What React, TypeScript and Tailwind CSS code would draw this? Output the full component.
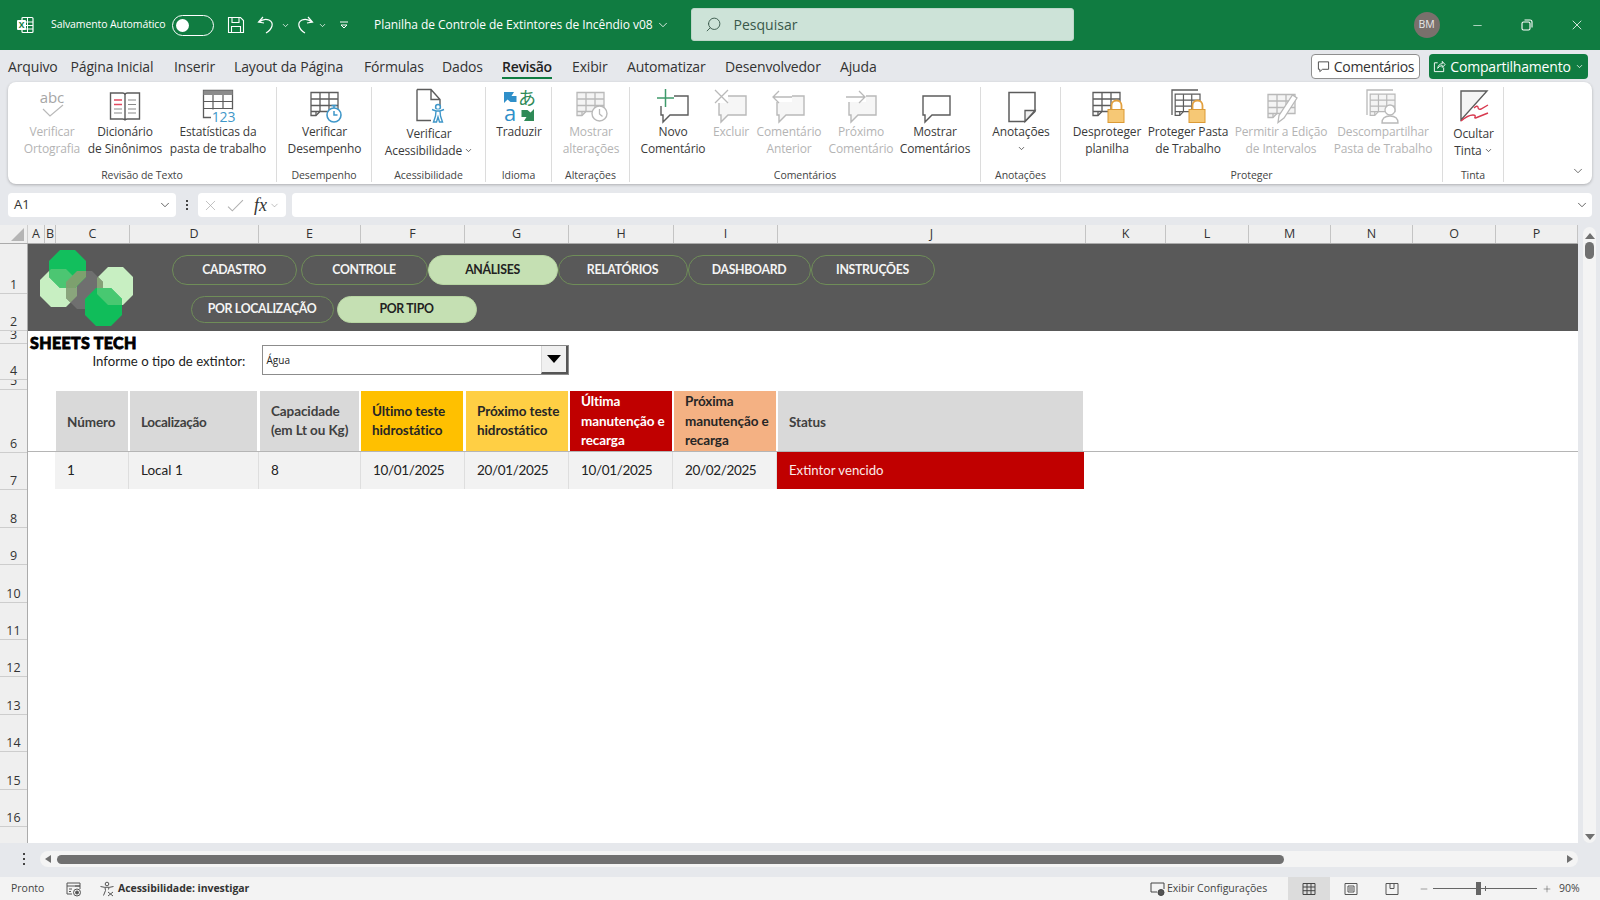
import React from "react";
import { ChevronDown, Search, Minus, X, Plus } from "lucide-react";

const D = "#5c5c5c";
const G = "#b9b9b9";

const Ic = ({ children }: { children: React.ReactNode }) => (
  <svg viewBox="0 0 36 36" fill="none" className="w-[36px] h-[36px] shrink-0">
    {children}
  </svg>
);

const Sheet = ({ c, soft = false }: { c: string; soft?: boolean }) => (
  <g stroke={c} strokeWidth="1.3">
    <path d="M4 4.500h27v19H13l-4 4H4z" fill={soft ? "#f4f4f4" : "#fff"} />
    <path d="M4 11h27M4 17.500h27M13 4.500v19M22 4.500v19" />
    <path d="M4 23.500h9M9 27.500v-4h4" />
  </g>
);

const Bubble = ({ c, k }: { c: string; k: "add" | "del" | "prev" | "next" | "show" }) => (
  <>
    <path d="M6 8h27v19H15l-7 7v-7H6z" fill={k === "show" || k === "add" ? "#fff" : "#f6f6f6"} stroke={c} strokeWidth="1.4" />
    {k === "add" && (
      <g>
        <rect x="1" y="1" width="18" height="17" fill="#fff" />
        <path d="M2 10h17M10.500 1v18" stroke="#3f9a6b" strokeWidth="1.500" />
      </g>
    )}
    {k === "del" && (
      <g>
        <rect x="2" y="2" width="13" height="13" fill="#fff" />
        <path d="M2 2l13 13M15 2L2 15" stroke={G} strokeWidth="1.300" />
      </g>
    )}
    {k === "prev" && (
      <g>
        <rect x="1" y="3" width="20" height="11" fill="#fff" />
        <path d="M2 9h19M8 3L2 9l6 6" stroke={G} strokeWidth="1.300" />
      </g>
    )}
    {k === "next" && (
      <g>
        <rect x="3" y="3" width="20" height="11" fill="#fff" />
        <path d="M3 9h19M16 3l6 6-6 6" stroke={G} strokeWidth="1.300" />
      </g>
    )}
  </>
);

const Lock = () => (
  <g>
    <path d="M22.500 22v-4.500a5 5 0 0 1 10 0V22" stroke="#e3a03e" strokeWidth="1.800" fill="#fff" />
    <rect x="19" y="21.500" width="16" height="13" fill="#f6c875" stroke="#dc9a35" />
  </g>
);

const icons: Record<string, React.ReactNode> = {
  abc: (
    <Ic>
      <text x="18" y="15" textAnchor="middle" fontSize="15" fill="#a6a6a6" fontFamily="Open Sans, sans-serif">abc</text>
      <path d="M9 21l7 7 13-11" stroke={G} strokeWidth="1.200" />
    </Ic>
  ),
  book: (
    <Ic>
      <path d="M3.500 5h12q2.500 0 2.500 2 0-2 2.500-2h12v26h-12q-2.500 0-2.500 1.500 0-1.500-2.500-1.500h-12zM18 7v25" stroke={D} strokeWidth="1.400" fill="#fff" />
      <path d="M7 12h8M7 16.500h8" stroke="#e1495f" strokeWidth="1.300" />
      <path d="M7 21h8M7 25h8M21 12h8M21 16.500h8M21 21h8M21 25h8" stroke="#8a8a8a" strokeWidth="1.200" />
    </Ic>
  ),
  stats: (
    <Ic>
      <path d="M3.500 2.500h29v27h-29z" stroke={D} fill="#fff" strokeWidth="1.300" />
      <path d="M3.500 2.500h29v4.500h-29z" fill="#8c8c8c" />
      <path d="M3.500 13.500h29M3.500 20.500h29M13 7v22M23 7v14" stroke={D} strokeWidth="1.200" />
      <rect x="11" y="21.500" width="25" height="14" fill="#fff" />
      <text x="23.500" y="33.500" textAnchor="middle" fontSize="14" fill="#3f97c9" fontFamily="Open Sans, sans-serif">123</text>
    </Ic>
  ),
  perf: (
    <Ic>
      <Sheet c={D} />
      <circle cx="27" cy="27" r="7" fill="#fff" stroke="#3f97c9" strokeWidth="1.600" />
      <path d="M27 23v4h3.500M24.500 17.500h5M27 17.500v2.500" stroke="#3f97c9" strokeWidth="1.500" />
    </Ic>
  ),
  access: (
    <Ic>
      <path d="M6 1.500h14l9 10v7M6 1.500v31h14M20 1.500v10h9" stroke={D} strokeWidth="1.400" fill="#fff" />
      <circle cx="27" cy="19" r="2.400" stroke="#3f97c9" strokeWidth="1.500" fill="#fff" />
      <path d="M21 21.500l4 1.500h4l4-1.500M25 23l-.5 5-2 6h3l1.500-5 1.500 5h3l-2-6-.5-5" stroke="#3f97c9" strokeWidth="1.400" fill="#fff" />
    </Ic>
  ),
  trans: (
    <Ic>
      <path d="M3 4v11l3.500-3.500 3 2.500h6V8h-5l2.500-4z" fill="#2f8fc9" />
      <text x="9" y="33" textAnchor="middle" fontSize="22" fill="#2f8fc9" fontFamily="Open Sans, sans-serif">a</text>
      <text x="26" y="17" textAnchor="middle" fontSize="18" fill="#2f8a57" fontFamily="Noto Sans CJK JP, sans-serif">あ</text>
      <path d="M33 33V21l-3.500 3.500-3-2.500h-6v7h5l-2.500 4z" fill="#2f8a57" />
    </Ic>
  ),
  changes: (
    <Ic>
      <Sheet c={G} soft />
      <circle cx="26.500" cy="25.500" r="7.500" fill="#fff" stroke={G} strokeWidth="1.400" />
      <path d="M26.500 21v5l3 2.500" stroke={G} strokeWidth="1.300" />
    </Ic>
  ),
  add: <Ic><Bubble c={D} k="add" /></Ic>,
  del: <Ic><Bubble c={G} k="del" /></Ic>,
  prev: <Ic><Bubble c={G} k="prev" /></Ic>,
  next: <Ic><Bubble c={G} k="next" /></Ic>,
  show: <Ic><Bubble c={D} k="show" /></Ic>,
  note: (
    <Ic>
      <path d="M6 4.500h26v19L22 33.500H6z" fill="#fff" stroke={D} strokeWidth="1.500" />
      <path d="M32 22.500H22v11z" fill="#f0f0f0" stroke={D} strokeWidth="1.300" />
    </Ic>
  ),
  lock1: (
    <Ic>
      <Sheet c={D} />
      <Lock />
    </Ic>
  ),
  lock2: (
    <Ic>
      <path d="M2 27V2h26" stroke={D} strokeWidth="1.300" />
      <g transform="translate(1.500 2) scale(0.92)"><Sheet c={D} /></g>
      <Lock />
    </Ic>
  ),
  edit: (
    <Ic>
      <g transform="translate(1 2)"><Sheet c={G} soft /></g>
      <path d="M34 10L21 30l-6 4.500 1-7L29.500 7z" fill="#fff" stroke={G} strokeWidth="1.300" />
    </Ic>
  ),
  unshare: (
    <Ic>
      <path d="M2 27V2h26" stroke={G} strokeWidth="1.300" />
      <g transform="translate(1.500 2) scale(0.92)"><Sheet c={G} soft /></g>
      <circle cx="25" cy="22" r="5" fill="#fff" stroke={G} strokeWidth="1.300" />
      <path d="M17 35q0-7 8-7t8 7z" fill="#fff" stroke={G} strokeWidth="1.300" />
    </Ic>
  ),
  ink: (
    <Ic>
      <path d="M5 3h26L5 32z" fill="#f4f4f4" stroke={D} strokeWidth="1.400" />
      <path d="M18 20q3-3 4-1 0 3 3 2l7-4" stroke="#d8394f" strokeWidth="1.400" />
      <path d="M5 33q7-6 12-6 3 0 2 2t3 0l10-4" stroke="#d8394f" strokeWidth="1.400" />
    </Ic>
  ),
};

type Btn = { w: number; icon: string; lines: string[]; off?: boolean; chev?: boolean; low?: boolean };
type Group = { label: string; w: number; pl: number; items: Btn[] };

const groups: Group[] = [
  {
    label: "Revisão de Texto", w: 269, pl: 8,
    items: [
      { w: 72, icon: "abc", lines: ["Verificar", "Ortografia"], off: true },
      { w: 74, icon: "book", lines: ["Dicionário", "de Sinônimos"] },
      { w: 112, icon: "stats", lines: ["Estatísticas da", "pasta de trabalho"] },
    ],
  },
  { label: "Desempenho", w: 95, pl: 0, items: [{ w: 95, icon: "perf", lines: ["Verificar", "Desempenho"] }] },
  { label: "Acessibilidade", w: 114, pl: 0, items: [{ w: 114, icon: "access", lines: ["Verificar", "Acessibilidade"], chev: true, low: true }] },
  { label: "Idioma", w: 66, pl: 0, items: [{ w: 66, icon: "trans", lines: ["Traduzir"] }] },
  { label: "Alterações", w: 78, pl: 0, items: [{ w: 78, icon: "changes", lines: ["Mostrar", "alterações"], off: true }] },
  {
    label: "Comentários", w: 351, pl: 7,
    items: [
      { w: 72, icon: "add", lines: ["Novo", "Comentário"] },
      { w: 44, icon: "del", lines: ["Excluir"], off: true },
      { w: 72, icon: "prev", lines: ["Comentário", "Anterior"], off: true },
      { w: 72, icon: "next", lines: ["Próximo", "Comentário"], off: true },
      { w: 76, icon: "show", lines: ["Mostrar", "Comentários"] },
    ],
  },
  { label: "Anotações", w: 80, pl: 0, items: [{ w: 80, icon: "note", lines: ["Anotações", ""], chev: true }] },
  {
    label: "Proteger", w: 382, pl: 6,
    items: [
      { w: 80, icon: "lock1", lines: ["Desproteger", "planilha"] },
      { w: 82, icon: "lock2", lines: ["Proteger Pasta", "de Trabalho"] },
      { w: 104, icon: "edit", lines: ["Permitir a Edição", "de Intervalos"], off: true },
      { w: 100, icon: "unshare", lines: ["Descompartilhar", "Pasta de Trabalho"], off: true },
    ],
  },
  { label: "Tinta", w: 61, pl: 0, items: [{ w: 61, icon: "ink", lines: ["Ocultar", "Tinta"], chev: true, low: true }] },
];

const tabs: [string, number][] = [
  ["Arquivo", 62.5], ["Página Inicial", 103.5], ["Inserir", 60], ["Layout da Página", 130], ["Fórmulas", 78], ["Dados", 60],
  ["Revisão", 70], ["Exibir", 55], ["Automatizar", 98], ["Desenvolvedor", 115], ["Ajuda", 40],
];

const cols: [string, number][] = [
  ["A", 17], ["B", 11], ["C", 74], ["D", 129], ["E", 102], ["F", 104], ["G", 104], ["H", 105], ["I", 104], ["J", 308],
  ["K", 80], ["L", 83], ["M", 82], ["N", 82], ["O", 83], ["P", 82],
];

const rows: [string, number][] = [
  ["1", 50], ["2", 37], ["3", 13], ["4", 36], ["5", 10], ["6", 63], ["7", 37.4], ["8", 37.4], ["9", 37.4], ["10", 37.4],
  ["11", 37.4], ["12", 37.4], ["13", 37.4], ["14", 37.4], ["15", 37.4], ["16", 37.4],
];

const Pill = ({ t, w, h, on }: { t: string; w: string; h: string; on?: boolean }) => (
  <div className={`${w} ${h} shrink-0 rounded-full flex items-center justify-center text-[12.3px] font-bold tracking-[-0.3px] font-['Lato',sans-serif] border-[1.5px] ${on ? "bg-[#c5e0b3] border-[#b7d5a2] text-[#222]" : "border-[#6f8d58] text-[#f4f4f4]"}`}>
    {t}
  </div>
);

function TitleBar() {
  return (
    <div className="h-[50px] shrink-0 bg-[#107c41] flex items-center text-white font-['Open_Sans',sans-serif]">
      <svg viewBox="0 0 18 18" className="w-[18px] h-[18px] ml-[16px]">
        <rect x="6" y="1.500" width="11" height="15" rx="1" fill="none" stroke="#fff" strokeWidth="1.200" />
        <path d="M11.500 2v14M6 6h11M6 9.500h11M6 13h11" stroke="#fff" strokeWidth="1" />
        <rect x="1" y="4" width="9" height="10" rx="1" fill="#fff" />
        <text x="5.500" y="12" textAnchor="middle" fontSize="8.500" fontWeight="700" fill="#107c41" fontFamily="Open Sans, sans-serif">X</text>
      </svg>
      <span className="ml-[17px] w-[121px] text-[10.5px] whitespace-nowrap tracking-[-0.1px]">Salvamento Automático</span>
      <div className="w-[42px] h-[21px] rounded-full border border-white flex items-center pl-[3px]">
        <div className="w-[13px] h-[13px] rounded-full bg-white" />
      </div>
      <svg viewBox="0 0 18 18" fill="none" stroke="#fff" strokeWidth="1.100" className="w-[18px] h-[18px] ml-[13px]">
        <path d="M1.500 1.500h12l3 3v12h-15zM5 1.500v5h7v-5M4.500 16.500v-6h9v6" />
      </svg>
      <svg viewBox="0 0 18 18" fill="none" stroke="#fff" strokeWidth="1.200" className="w-[18px] h-[18px] ml-[12px]">
        <path d="M6 1L1.500 6 7 7M2 6q5-4 10-2 4 2 3 6-1 4-6 7" />
      </svg>
      <ChevronDown size={9} strokeWidth={2} className="ml-[6px]" />
      <svg viewBox="0 0 18 18" fill="none" stroke="#fff" strokeWidth="1.200" className="w-[18px] h-[18px] ml-[6px]">
        <path d="M12 1l4.500 5L11 7M16 6q-5-4-10-2-4 2-3 6 1 4 6 7" />
      </svg>
      <ChevronDown size={9} strokeWidth={2} className="ml-[4px]" />
      <svg viewBox="0 0 10 10" fill="none" stroke="#fff" strokeWidth="1" className="w-[10px] h-[10px] ml-[12px]">
        <path d="M1 2h8M2 5l3 3 3-3z" />
      </svg>
      <span className="ml-[25px] text-[12px] tracking-[-0.05px] whitespace-nowrap">Planilha de Controle de Extintores de Incêndio v08</span>
      <ChevronDown size={14} strokeWidth={1.4} className="ml-[3px]" />
      <div className="ml-[21px] mb-[2px] w-[383px] h-[33px] bg-[#cde3d8] rounded-[3px] flex items-center text-[#39584a] border border-[#bcd6c8]">
        <Search size={17} strokeWidth={1.3} className="ml-[13px] -scale-x-100" />
        <span className="ml-[12px] text-[14px]">Pesquisar</span>
      </div>
      <div className="ml-[340px] w-[26px] h-[26px] rounded-full bg-[#7a706c] text-[10.5px] flex items-center justify-center text-[#e8e8e8]">BM</div>
      <Minus size={13} strokeWidth={1.2} className="ml-[31px]" />
      <svg viewBox="0 0 12 12" fill="none" stroke="#fff" strokeWidth="1.100" className="w-[12px] h-[12px] ml-[37px]">
        <rect x="1" y="3" width="8" height="8" rx="1.500" />
        <path d="M3.500 1h5.500a2 2 0 0 1 2 2v5.500" />
      </svg>
      <X size={16} strokeWidth={1.2} className="ml-[36px]" />
    </div>
  );
}

function TabsRow() {
  return (
    <div className="h-[32px] shrink-0 flex items-center font-['Open_Sans',sans-serif] text-[14px] text-[#333]">
      <div className="flex-1 flex pl-[8px] tracking-[-0.15px]">
        {tabs.map(([t, w]) => (
          <div key={t} style={{ width: w }} className="shrink-0 whitespace-nowrap">
            {t === "Revisão" ? (
              <span className="relative inline-block font-semibold text-[#222] tracking-[-0.3px]">
                {t}
                <span className="absolute left-0 right-0 bottom-[-2px] h-[2px] bg-[#107c41]" />
              </span>
            ) : (
              t
            )}
          </div>
        ))}
      </div>
      <div className="w-[109px] h-[25px] bg-white border border-[#8f8f8f] rounded-[4px] flex items-center justify-center gap-[4px] text-[14px] tracking-[-0.3px]">
        <svg viewBox="0 0 14 14" fill="none" stroke="#444" strokeWidth="1" className="w-[13px] h-[13px]">
          <path d="M1.500 2h11v8H6l-3 2.500V10H1.500z" />
        </svg>
        Comentários
      </div>
      <div className="ml-[9px] mr-[12px] w-[159px] h-[25px] bg-[#107c41] text-white rounded-[4px] flex items-center justify-center gap-[4px] text-[14px] tracking-[-0.2px]">
        <svg viewBox="0 0 14 14" fill="none" stroke="#fff" strokeWidth="1" className="w-[13px] h-[13px]">
          <path d="M5 3H1.500v9.500h10V8M5 9q1-5 5-5V1.500L13 5l-3 3V6q-3 0-5 3z" />
        </svg>
        Compartilhamento
        <ChevronDown size={9} strokeWidth={2} />
      </div>
    </div>
  );
}

function Ribbon() {
  return (
    <div className="mx-[8px] h-[102px] shrink-0 bg-white rounded-[8px] shadow-[0_1px_3px_rgba(0,0,0,0.25)] flex font-['Open_Sans',sans-serif]">
      {groups.map((g) => (
        <div key={g.label} style={{ width: g.w }} className="shrink-0 h-full pt-[5px] pb-[2px]">
          <div className="h-full flex flex-col border-r border-[#dcdcdc]">
            <div className="h-[81px] flex" style={{ paddingLeft: g.pl }}>
              {g.items.map((b) => (
                <div key={b.icon} style={{ width: b.w }} className={`shrink-0 flex flex-col items-center text-[12px] leading-[17px] tracking-[-0.12px] whitespace-nowrap ${b.off ? "text-[#b4b4b4]" : "text-[#3a3a3a]"}`}>
                  <div className="mt-[1px] h-[35px]">{icons[b.icon]}</div>
                  <div className={b.low ? "mt-[2px]" : "mt-0"}>{b.lines[0]}</div>
                  <div className="flex items-center gap-[2px] h-[17px]">
                    {b.lines[1]}
                    {b.chev && <ChevronDown size={9} strokeWidth={2} />}
                  </div>
                </div>
              ))}
            </div>
            <div className="text-center text-[10.5px] leading-[14px] text-[#444] tracking-[-0.05px]">{g.label}</div>
          </div>
        </div>
      ))}
      <div className="flex-1 flex items-end justify-end pr-[7px] pb-[6px]">
        <ChevronDown size={14} strokeWidth={1.3} className="text-[#444]" />
      </div>
    </div>
  );
}

function FormulaBar() {
  return (
    <div className="h-[24px] mt-[9px] shrink-0 flex items-center px-[8px] font-['Open_Sans',sans-serif] text-[13px] text-[#333]">
      <div className="w-[168px] h-full bg-white rounded-[4px] flex items-center justify-between pl-[6px] pr-[4px]">
        <span>A1</span>
        <ChevronDown size={14} strokeWidth={1.3} />
      </div>
      <div className="w-[22px] flex flex-col items-center gap-[2px]">
        <div className="w-[2px] h-[2px] bg-[#444]" />
        <div className="w-[2px] h-[2px] bg-[#444]" />
        <div className="w-[2px] h-[2px] bg-[#444]" />
      </div>
      <div className="w-[88px] h-full bg-white rounded-[4px] flex items-center pl-[4px]">
        <X size={17} strokeWidth={1} className="text-[#a8a8a8]" />
        <svg viewBox="0 0 16 16" fill="none" stroke="#b0b0b0" strokeWidth="1" className="w-[17px] h-[17px] ml-[8px]">
          <path d="M1 9l4 4 10-10" />
        </svg>
        <span className="ml-[10px] text-[18px] leading-none italic font-['Liberation_Serif',serif] text-[#333]">fx</span>
        <ChevronDown size={11} strokeWidth={1} className="ml-[2px] text-[#777]" />
      </div>
      <div className="ml-[6px] flex-1 h-full bg-white rounded-[4px] flex items-center justify-end pr-[3px]">
        <ChevronDown size={14} strokeWidth={1.3} />
      </div>
    </div>
  );
}

function ColHeaders() {
  return (
    <div className="h-[19px] shrink-0 flex bg-[#efefef] border-b border-[#ababab] font-['Open_Sans',sans-serif] text-[12.5px] text-[#333]">
      <div className="w-[28px] shrink-0 flex items-end justify-end pr-[3px] pb-[2px] border-r border-[#cfcfcf]">
        <div className="w-0 h-0 border-l-[13px] border-l-transparent border-b-[13px] border-b-[#b5b5b5]" />
      </div>
      {cols.map(([c, w]) => (
        <div key={c} style={{ width: w }} className="shrink-0 flex items-center justify-center border-r border-[#c4c4c4] leading-none">{c}</div>
      ))}
    </div>
  );
}

function RowHeaders() {
  return (
    <div className="w-[28px] shrink-0 bg-[#efefef] border-r border-[#ababab] font-['Open_Sans',sans-serif] text-[12.5px] text-[#333] overflow-hidden">
      {rows.map(([r, h]) => (
        <div key={r} style={{ height: h }} className="flex items-end justify-center border-b border-[#cdcdcd] overflow-hidden leading-[16px]">
          {r}
        </div>
      ))}
    </div>
  );
}

const H = ({ w, bg, c, children, ml = "ml-[2px]", cn = "" }: { w: string; bg: string; c: string; children: React.ReactNode; ml?: string; cn?: string }) => (
  <div className={`${w} ${bg} ${c} ${ml} ${cn} shrink-0 h-full flex items-center pl-[11px] pr-[2px] text-[13.5px] font-bold leading-[19.5px] tracking-[-0.1px]`}>
    <div>{children}</div>
  </div>
);

const Cell = ({ w, children, date }: { w: string; children: React.ReactNode; date?: boolean }) => (
  <div className={`${w} ${date ? "tracking-[-0.35px]" : ""} shrink-0 h-full bg-[#f2f2f2] border-r border-[#dedede] flex items-center pl-[12px] text-[13.5px] text-[#222]`}>{children}</div>
);

function Logo() {
  const oct = "M11 0h15l11 11v16L26 38H11L0 27V11z";
  const top = "translate(9 0)";
  const left = "translate(0 19)";
  const right = "translate(57 17)";
  const bottom = "translate(45 38)";
  const gray = "translate(26 21)";
  return (
    <svg viewBox="0 0 93 77" className="w-[93px] h-[77px] shrink-0">
      <defs>
        <clipPath id="clipTop"><path d={oct} transform={top} /></clipPath>
        <clipPath id="clipRight"><path d={oct} transform={right} /></clipPath>
        <clipPath id="clipGray"><path d={oct} transform={gray} /></clipPath>
      </defs>
      <path d={oct} transform={left} fill="#c8efc2" />
      <path d={oct} transform={right} fill="#c8efc2" />
      <path d={oct} transform={gray} fill="#6f6f6f" />
      <g clipPath="url(#clipGray)">
        <path d={oct} transform={left} fill="#8aa57c" />
        <path d={oct} transform={right} fill="#86a277" />
      </g>
      <path d={oct} transform={top} fill="#12bf5d" />
      <g clipPath="url(#clipTop)">
        <path d={oct} transform={left} fill="#4cc672" />
      </g>
      <g clipPath="url(#clipGray)">
        <g clipPath="url(#clipTop)">
          <rect x="0" y="0" width="93" height="77" fill="#7da06e" />
        </g>
      </g>
      <path d={oct} transform={bottom} fill="#10bd5a" />
      <g clipPath="url(#clipRight)">
        <path d={oct} transform={bottom} fill="#48c871" />
      </g>
    </svg>
  );
}

function Band() {
  return (
    <div className="h-[87px] shrink-0 bg-[#595959] flex pl-[12px] pt-[6px]">
      <Logo />
      <div className="ml-[38.500px] mt-[5px] flex flex-col">
        <div className="flex">
          <Pill t="CADASTRO" w="w-[125px]" h="h-[30px]" />
          <div className="w-[4px]" />
          <Pill t="CONTROLE" w="w-[127px]" h="h-[30px]" />
          <Pill t="ANÁLISES" w="w-[130px]" h="h-[30px]" on />
          <Pill t="RELATÓRIOS" w="w-[130px]" h="h-[30px]" />
          <Pill t="DASHBOARD" w="w-[123px]" h="h-[30px]" />
          <Pill t="INSTRUÇÕES" w="w-[124px]" h="h-[30px]" />
        </div>
        <div className="flex mt-[11px] ml-[19px]">
          <Pill t="POR LOCALIZAÇÃO" w="w-[143px]" h="h-[27px]" />
          <div className="w-[3px]" />
          <Pill t="POR TIPO" w="w-[140px]" h="h-[27px]" on />
        </div>
      </div>
    </div>
  );
}

function FormArea() {
  return (
    <div className="h-[59px] shrink-0 font-['Lato',sans-serif]">
      <div className="pl-[2px] pt-[4px] h-[19px] text-[16px] font-black leading-[16px] text-black tracking-[0.35px] whitespace-nowrap [-webkit-text-stroke:0.8px_black]">SHEETS TECH</div>
      <div className="flex items-start pl-[64.500px]">
        <div className="w-[169px] text-[13.2px] text-[#222] whitespace-nowrap leading-[22px]">Informe o tipo de extintor:</div>
        <div className="w-[307px] -mt-[5px] h-[30px] border border-[#8c8c8c] bg-white flex items-center justify-between text-[10px] text-[#222] font-['Open_Sans',sans-serif]">
          <span className="pl-[4px]">Água</span>
          <div className="w-[27px] h-full bg-[#f0f0f0] border-r-2 border-b-2 border-[#555] border-l border-l-[#dadada] flex items-center justify-center">
            <div className="w-0 h-0 border-l-[7px] border-r-[7px] border-t-[8px] border-l-transparent border-r-transparent border-t-black" />
          </div>
        </div>
      </div>
    </div>
  );
}

function DataTable() {
  return (
    <div className="font-['Lato',sans-serif]">
      <div className="h-[61px] mt-[1px] flex pl-[28px] border-b border-[#b5b5b5]">
        <H w="w-[72px]" bg="bg-[#d9d9d9]" c="text-[#404040]" ml="ml-0" cn="pt-[3px]">Número</H>
        <H w="w-[127px]" bg="bg-[#d9d9d9]" c="text-[#404040]" cn="pt-[3px] tracking-[-0.3px]">Localização</H>
        <H w="w-[99px]" bg="bg-[#d9d9d9]" c="text-[#404040]" ml="ml-[3px]"><>Capacidade<br />(em Lt ou Kg)</></H>
        <H w="w-[102px]" bg="bg-[#ffc000]" c="text-[#262626]"><>Último teste<br />hidrostático</></H>
        <H w="w-[102px]" bg="bg-[#ffcf44]" c="text-[#262626]" ml="ml-[3px]"><>Próximo teste<br />hidrostático</></H>
        <H w="w-[102px]" bg="bg-[#c00000]" c="text-white" cn="pt-[1px]"><>Última<br />manutenção e<br />recarga</></H>
        <H w="w-[102px]" bg="bg-[#f4b183]" c="text-[#262626]" cn="pt-[1px]"><>Próxima<br />manutenção e<br />recarga</></H>
        <H w="w-[305px]" bg="bg-[#d9d9d9]" c="text-[#404040]" cn="pt-[3px]">Status</H>
      </div>
      <div className="h-[37px] flex pl-[27px]">
        <Cell w="w-[74px]">1</Cell>
        <Cell w="w-[130px]">Local 1</Cell>
        <Cell w="w-[102px]">8</Cell>
        <Cell w="w-[104px]" date>10/01/2025</Cell>
        <Cell w="w-[104px]" date>20/01/2025</Cell>
        <Cell w="w-[104px]" date>10/01/2025</Cell>
        <Cell w="w-[104px]" date>20/02/2025</Cell>
        <div className="w-[307px] h-full bg-[#c00000] text-[#fbe9e9] flex items-center pl-[12px] text-[13.2px]">Extintor vencido</div>
      </div>
    </div>
  );
}

function VScroll() {
  return (
    <div className="w-[22px] shrink-0 pl-[5px] pr-[4px] -mt-[19px] pt-[2px]">
      <div className="h-full bg-[#f4f4f4] rounded-full flex flex-col items-center pt-[6px] pb-[3px] justify-between">
        <div className="flex flex-col items-center">
          <div className="w-0 h-0 border-l-[5px] border-r-[5px] border-b-[6px] border-l-transparent border-r-transparent border-b-[#707070]" />
          <div className="w-[9px] h-[17px] rounded-full bg-[#707070] mt-[3px]" />
        </div>
        <div className="w-0 h-0 border-l-[5px] border-r-[5px] border-t-[6px] border-l-transparent border-r-transparent border-t-[#707070]" />
      </div>
    </div>
  );
}

function HScroll() {
  return (
    <div className="h-[34px] shrink-0 flex items-center pb-[2px] pl-[23px] pr-[22px]">
      <div className="w-[3px] flex flex-col gap-[3px]">
        <div className="w-[2px] h-[2px] bg-[#444]" />
        <div className="w-[2px] h-[2px] bg-[#444]" />
        <div className="w-[2px] h-[2px] bg-[#444]" />
      </div>
      <div className="ml-[14px] flex-1 h-[16px] bg-[#f4f4f4] rounded-full flex items-center pl-[5px] pr-[5px]">
        <div className="w-0 h-0 border-t-[4px] border-b-[4px] border-r-[6px] border-t-transparent border-b-transparent border-r-[#707070]" />
        <div className="ml-[6px] w-[1227px] h-[9px] bg-[#707070] rounded-full" />
        <div className="flex-1" />
        <div className="w-0 h-0 border-t-[4px] border-b-[4px] border-l-[6px] border-t-transparent border-b-transparent border-l-[#707070]" />
      </div>
    </div>
  );
}

function StatusBar() {
  return (
    <div className="h-[23px] shrink-0 bg-[#f3f3f3] flex items-center font-['Open_Sans',sans-serif] text-[10.5px] text-[#444]">
      <span className="ml-[11px] w-[55px]">Pronto</span>
      <svg viewBox="0 0 16 16" fill="none" stroke="#555" strokeWidth="1" className="w-[16px] h-[16px]">
        <path d="M1 2h13v3H1zM1 5v8h5M9 5h5v3M3 8h3M3 10.500h2" />
        <circle cx="11" cy="11.500" r="3.500" />
        <circle cx="11" cy="11.500" r="1.500" fill="#555" />
      </svg>
      <svg viewBox="0 0 16 16" fill="none" stroke="#555" strokeWidth="1" className="w-[16px] h-[16px] ml-[17px]">
        <circle cx="8" cy="3" r="1.800" />
        <path d="M1.500 5.500l4 .8h5l4-.8M6 6.500l.5 3-2 5M10 6.500l-.5 2M9 11l5 4M14 11l-5 4" />
      </svg>
      <span className="ml-[3px] font-bold tracking-[-0.05px] text-[#333] w-[130px] whitespace-nowrap">Acessibilidade: investigar</span>
      <div className="ml-[902px] flex items-center">
        <svg viewBox="0 0 16 16" fill="none" stroke="#444" strokeWidth="1" className="w-[16px] h-[16px]">
          <path d="M7 11H1V2h13v6" />
          <circle cx="11" cy="11.500" r="3" fill="#555" />
        </svg>
        <span className="ml-[1px] w-[121px]">Exibir Configurações</span>
      </div>
      <div className="w-[42px] h-full bg-[#dcdcdc] flex items-center justify-center">
        <svg viewBox="0 0 14 14" fill="none" stroke="#444" strokeWidth="1" className="w-[14px] h-[14px]"><path d="M1 1.500h12v11H1zM1 5h12M1 8.700h12M5 1.500v11M9 1.500v11" /></svg>
      </div>
      <svg viewBox="0 0 14 14" fill="none" stroke="#555" strokeWidth="1" className="w-[14px] h-[14px] ml-[14px]"><path d="M1 1.500h12v11H1zM4 4h6v6H4zM5 6h4M5 8h4" /></svg>
      <svg viewBox="0 0 14 14" fill="none" stroke="#555" strokeWidth="1" className="w-[14px] h-[14px] ml-[27px]"><path d="M1 1.500h12v11H1zM5 1.500v5h4v-5" /></svg>
      <Minus size={10} strokeWidth={1.2} className="ml-[20px]" />
      <div className="ml-[4px] w-[104px] h-[13px] flex items-center">
        <div className="w-[43px] h-px bg-[#666]" />
        <div className="w-[5px] h-[13px] bg-[#666]" />
        <div className="w-[4px] h-px bg-[#666]" />
        <div className="w-px h-[5px] bg-[#666]" />
        <div className="flex-1 h-px bg-[#666]" />
      </div>
      <Plus size={10} strokeWidth={1.2} className="ml-[5px]" />
      <span className="ml-[7px]">90%</span>
    </div>
  );
}

export default function App() {
  return (
    <div className="w-[1600px] h-[900px] overflow-hidden bg-[#e6e8ec] flex flex-col">
      <TitleBar />
      <TabsRow />
      <Ribbon />
      <FormulaBar />
      <div className="h-[8px] shrink-0" />
      <div className="w-[1578px] shrink-0"><ColHeaders /></div>
      <div className="h-[599px] shrink-0 flex">
        <RowHeaders />
        <div className="flex-1 bg-white flex flex-col min-w-0 overflow-hidden">
          <Band />
          <FormArea />
          <DataTable />
        </div>
        <VScroll />
      </div>
      <HScroll />
      <StatusBar />
    </div>
  );
}
